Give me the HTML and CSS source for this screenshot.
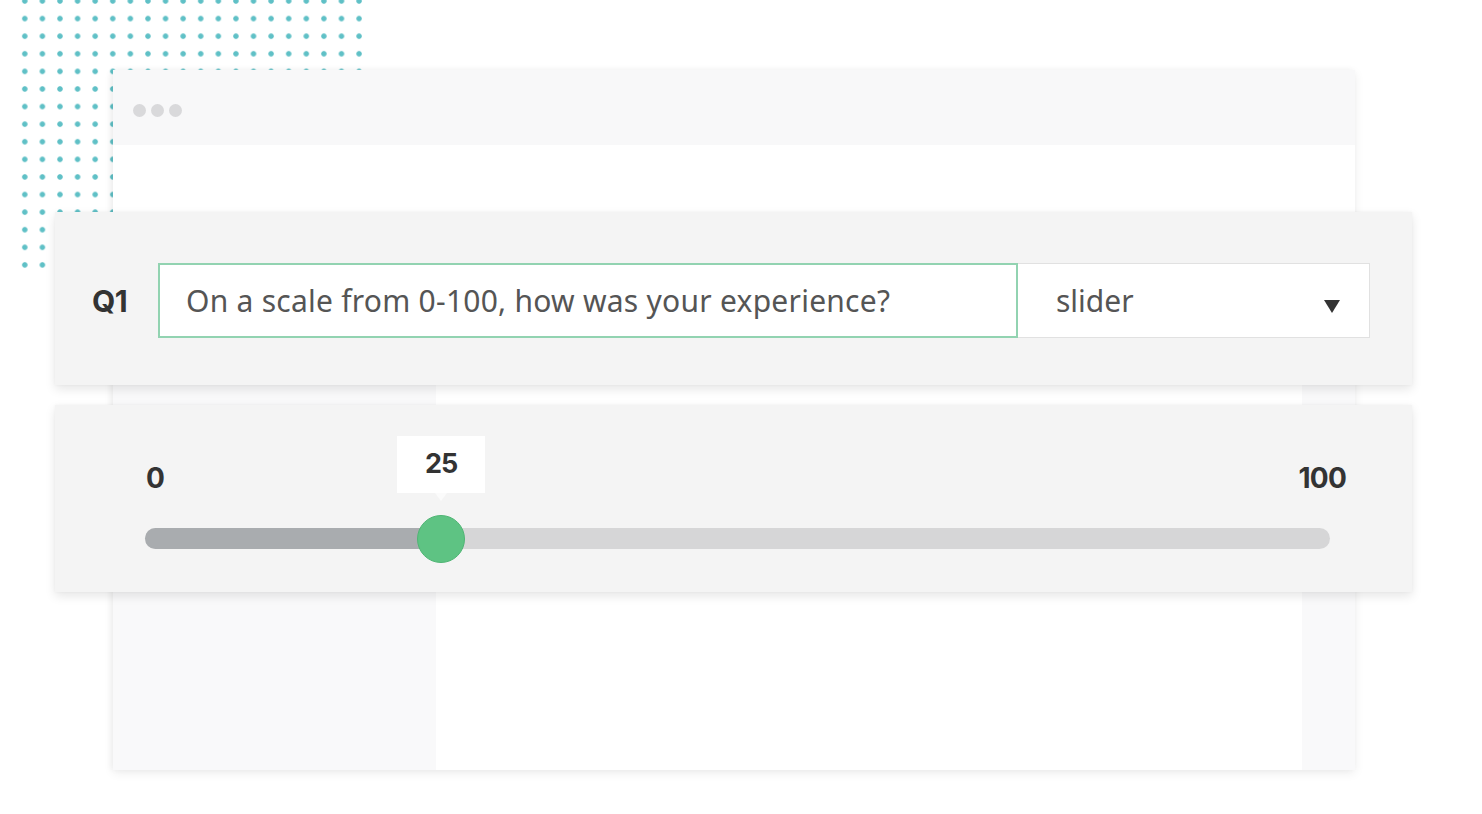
FILE: index.html
```html
<!DOCTYPE html>
<html lang="en">
<head>
<meta charset="utf-8">
<title>Slider question</title>
<link rel="stylesheet" href="styles.css">
</head>
<body>
<div class="stage">
  <div class="dots"></div>
  <div class="window">
    <div class="win-head">
      <span class="wdot"></span><span class="wdot"></span><span class="wdot"></span>
    </div>
    <div class="win-gap"></div>
    <div class="win-body">
      <div class="col-left"></div>
      <div class="col-mid"></div>
      <div class="col-right"></div>
    </div>
  </div>
  <div class="cards">
    <div class="card q-card">
      <div class="q-label">Q1</div>
      <div class="q-input">On a scale from 0-100, how was your experience?</div>
      <div class="q-select">
        <span>slider</span>
        <svg class="caret" width="16" height="14" viewBox="0 0 16 14"><path d="M0 1 H16 L8 14 Z" fill="#333"/></svg>
      </div>
    </div>
    <div class="card s-card">
      <div class="s-labels">
        <span class="s-num">0</span>
        <span class="s-num">100</span>
      </div>
      <div class="s-track">
        <div class="s-fill" style="width:25%"></div>
        <div class="s-thumb" style="left:25%">
          <div class="s-tip">25</div>
        </div>
      </div>
    </div>
  </div>
</div>
</body>
</html>
```
FILE: styles.css
```css
* { box-sizing: border-box; }
html, body { margin: 0; padding: 0; background: #ffffff; }
body { font-family: "Noto Sans", "Open Sans", sans-serif; }

.stage {
  position: relative;
  width: 1482px;
  height: 814px;
  overflow: hidden;
}

.dots {
  position: absolute;
  left: 16.2px;
  top: 0;
  width: 354px;
  height: 275px;
  background-image: radial-gradient(circle, #5fc0c6 2.3px, rgba(95,192,198,0) 3.1px);
  background-size: 17.6px 17.6px;
  background-position: 0 -7.8px;
}

.window {
  position: relative;
  margin-left: 113px;
  top: 70px;
  width: 1242px;
  height: 700px;
  background: #ffffff;
  box-shadow: 0 3px 10px rgba(0,0,0,0.07), -2px 0 6px rgba(0,0,0,0.04);
  display: flex;
  flex-direction: column;
}

.win-head {
  height: 75px;
  background: #f8f8f9;
  display: flex;
  align-items: center;
  gap: 5px;
  padding-left: 20px;
  padding-top: 5px;
}
.wdot {
  width: 13px;
  height: 13px;
  border-radius: 50%;
  background: #d9d9db;
}
.win-gap { height: 67px; background: #ffffff; }
.win-body { flex: 1; display: flex; }
.col-left { width: 323px; background: #f9f9fa; }
.col-mid { flex: 1; background: #ffffff; }
.col-right { width: 53px; background: #f9f9fa; }

.cards {
  position: absolute;
  left: 55px;
  top: 212px;
  width: 1357px;
  display: flex;
  flex-direction: column;
  gap: 20px;
}

.card {
  background: #f4f4f4;
  box-shadow: 0 4px 10px rgba(0,0,0,0.10), 0 0 3px rgba(0,0,0,0.04);
}

.q-card {
  height: 173px;
  display: flex;
  align-items: center;
  padding: 4px 42px 0 37px;
}
.q-label {
  width: 66px;
  font-family: "Inter", "Lato", sans-serif;
  font-weight: 700;
  font-size: 30px;
  color: #333333;
  letter-spacing: -0.5px;
}
.q-input {
  width: 860px;
  height: 75px;
  background: #ffffff;
  border: 2px solid #92d3b1;
  display: flex;
  align-items: center;
  padding-left: 26px;
  font-size: 30px;
  letter-spacing: 0.25px;
  color: #555555;
}
.q-select {
  flex: 1;
  height: 75px;
  background: #ffffff;
  border: 1px solid #e1e1e1;
  border-left: none;
  display: flex;
  align-items: center;
  justify-content: space-between;
  padding: 0 29px 0 38px;
  font-size: 30px;
  color: #555555;
}
.caret { margin-top: 10px; }

.s-card {
  height: 187px;
  padding: 56px 66px 0 90px;
  display: flex;
  flex-direction: column;
}
.s-labels {
  display: flex;
  justify-content: space-between;
  padding-left: 1px;
  height: 34px;
}
.s-num {
  font-family: "Inter", "Lato", sans-serif;
  font-weight: 700;
  font-size: 28px;
  color: #333333;
  letter-spacing: -0.8px;
}
.s-track {
  position: relative;
  margin-top: 33px;
  margin-right: 16px;
  height: 21px;
  border-radius: 11px;
  background: #d6d6d7;
}
.s-fill {
  height: 100%;
  border-radius: 11px 0 0 11px;
  background: #a9acaf;
}
.s-thumb {
  position: absolute;
  top: 50%;
  width: 48px;
  height: 48px;
  margin-left: -24px;
  margin-top: -24px;
  border-radius: 50%;
  background: #5ec383;
  border: 1px solid #4fb574;
}
.s-tip {
  position: absolute;
  left: 50%;
  bottom: 69px;
  width: 88px;
  height: 57px;
  margin-left: -44px;
  background: #ffffff;
  display: flex;
  align-items: center;
  justify-content: center;
  font-family: "Inter", "Lato", sans-serif;
  font-weight: 700;
  font-size: 27px;
  color: #333333;
  letter-spacing: -0.8px;
  padding-bottom: 2px;
}
.s-tip::after {
  content: "";
  position: absolute;
  left: 50%;
  top: 100%;
  margin-left: -6px;
  border-left: 6px solid transparent;
  border-right: 6px solid transparent;
  border-top: 8px solid #fbfbfb;
}
```
